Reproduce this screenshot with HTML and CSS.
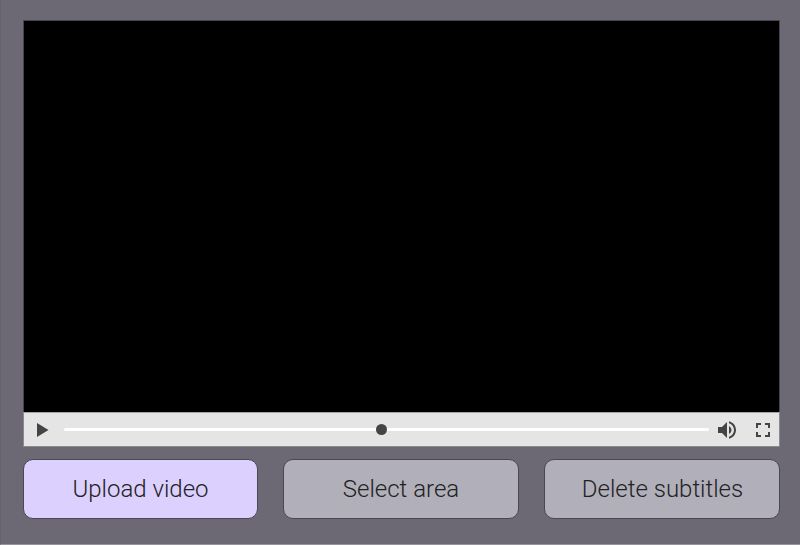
FILE: index.html
```
<!DOCTYPE html>
<html lang="en">
<head>
<meta charset="utf-8">
<title>Video subtitles</title>
<link rel="stylesheet" href="styles.css">
</head>
<body>
<main class="app">
  <section class="player">
    <div class="screen"></div>
    <div class="controls">
      <svg class="play" viewBox="0 0 12 14"><path d="M0 0v14l11.500-7z"/></svg>
      <div class="track"><div class="bar"></div><div class="thumb"></div></div>
      <svg class="icon volume" viewBox="0 0 24 24"><path d="M3 9v6h4l5 5V4L7 9H3zm13.500 3c0-1.770-1.020-3.290-2.500-4.030v8.050c1.480-.73 2.500-2.250 2.500-4.020zM14 3.230v2.060c2.890.86 5 3.540 5 6.710s-2.110 5.850-5 6.710v2.060c4.010-.91 7-4.490 7-8.770s-2.990-7.860-7-8.770z"/></svg>
      <svg class="icon full" viewBox="0 0 24 24"><path d="M7 14H5v5h5v-2H7v-3zm-2-4h2V7h3V5H5v5zm12 7h-3v2h5v-5h-2v3zM14 5v2h3v3h2V5h-5z"/></svg>
    </div>
  </section>
  <div class="actions">
    <button class="btn primary">Upload video</button>
    <button class="btn">Select area</button>
    <button class="btn last">Delete subtitles</button>
  </div>
</main>
</body>
</html>
```
FILE: styles.css
```
* { box-sizing: border-box; }
body { margin: 0; background: #6d6974; font-family: Roboto, sans-serif; }
.app { height: 545px; padding: 20px 20px 0 22px; border-left: 1px solid #67636e; border-bottom: 1px solid #97949c; }
.player { border: 1px solid #47454b; border-bottom: 0; height: 427px; width: 757px; display: flex; flex-direction: column; }
.screen { flex: 1; background: #000; }
.controls { height: 35px; margin: 0 -1px; background: #e5e5e5; border: 1px solid #8b8b8b; border-top-color: #a3a3a3; display: flex; align-items: center; }
svg { fill: #444; flex: none; }
.play { width: 12px; height: 14px; margin-left: 13px; }
.track { position: relative; flex: 1; margin: 0 7px 0 15px; }
.bar { height: 3px; background: #fff; border-radius: 2px; }
.thumb { position: absolute; left: 312px; top: -4px; width: 11px; height: 11px; border-radius: 50%; background: #444; }
.icon { width: 24px; height: 24px; }
.volume { margin-left: -1px; }
.full { margin: 0 4px 0 12px; }
.actions { display: grid; grid-template-columns: 235px 236px 236px; justify-content: space-between; margin-top: 12px; width: 757px; }
.btn { height: 60px; border: 1px solid #4b4753; border-radius: 10px; background: #b1afb9; color: #222; font: 300 24px Roboto, sans-serif; padding: 0 0 1px; }
.primary { background: #dcd0ff; }
.last { padding-left: 1px; }
```
